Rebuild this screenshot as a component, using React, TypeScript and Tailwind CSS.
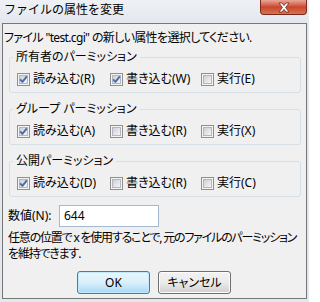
import React from 'react'

const font = "[font-family:'Noto_Sans','Noto_Sans_CJK_JP',sans-serif] [font-feature-settings:'palt']"

function Check({ checked }: { checked: boolean }) {
  return (
    <svg width="13" height="13" viewBox="0 0 13 13" className="shrink-0">
      <defs>
        <linearGradient id="cbfill" x1="0" y1="0" x2="1" y2="1">
          <stop offset="0" stopColor="#c9cdd3" />
          <stop offset="1" stopColor="#f8f8f8" />
        </linearGradient>
      </defs>
      <rect x="0.5" y="0.5" width="12" height="12" fill="#f4f4f4" stroke="#8e8f8f" />
      <rect x="2.5" y="2.5" width="8" height="8" fill="url(#cbfill)" stroke="#b3b7bd" />
      {checked && (
        <path d="M3.2 6.4 L5.4 8.8 L9.8 3.4" fill="none" stroke="#4e69a8" strokeWidth="1.9" strokeLinejoin="round" />
      )}
    </svg>
  )
}

function Item({ label, checked, w }: { label: string; checked: boolean; w: string }) {
  return (
    <div className={`flex items-center gap-[3px] ${w}`}>
      <Check checked={checked} />
      <span className="whitespace-nowrap">{label}</span>
    </div>
  )
}

function Group({ title, items }: { title: string; items: { label: string; checked: boolean }[] }) {
  return (
    <fieldset className="mx-[6px] mr-[5px] border border-[#d5dfe5] rounded-[3px] pl-[3px] pt-[6px] pb-[5px]">
      <legend className="px-[3px] leading-[16px]">{title}</legend>
      <div className="flex h-[16px] items-center pl-[4px]">
        <Item label={items[0].label} checked={items[0].checked} w="w-[93px]" />
        <Item label={items[1].label} checked={items[1].checked} w="w-[91px]" />
        <Item label={items[2].label} checked={items[2].checked} w="" />
      </div>
    </fieldset>
  )
}

export default function App() {
  return (
    <div className={`w-[309px] h-[302px] bg-[#e3e8ee] text-[12px] leading-[16px] text-black overflow-hidden ${font}`}>
      {/* title bar */}
      <div className="h-[23px] flex items-start justify-between bg-gradient-to-b from-[#eef1f5] to-[#e3e8ee]">
        <div className="pl-[4px] pt-[2px] [font-feature-settings:normal] leading-[16px]">ファイルの属性を変更</div>
        <div className="mr-[2px] w-[47px] h-[15px] rounded-b-[4px] border border-t-0 border-[#7a2a1c] bg-gradient-to-b from-[#e9a797] via-[#c8462d] to-[#d8714f] flex items-center justify-center">
          <svg width="14" height="11" viewBox="0 0 14 11">
            <path d="M2 1 H5 L7 3.6 L9 1 H12 L8.6 5.5 L12 10 H9 L7 7.4 L5 10 H2 L5.4 5.5 Z" fill="#fff" stroke="#6a2a20" strokeWidth="0.8" strokeLinejoin="round" />
          </svg>
        </div>
      </div>

      {/* client area */}
      <div className="ml-[2px] w-[305px] h-[276px] border border-[#767676] bg-[#f0f0f0] flex flex-col">
        <div className="pl-[1px] pt-[6px] whitespace-nowrap tracking-[-0.65px]">ファイル "test.cgi" の新しい属性を選択してください.</div>

        <div className="mt-[3px] flex flex-col gap-[8px]">
          <Group
            title="所有者のパーミッション"
            items={[
              { label: '読み込む(R)', checked: true },
              { label: '書き込む(W)', checked: true },
              { label: '実行(E)', checked: false },
            ]}
          />
          <Group
            title="グループ パーミッション"
            items={[
              { label: '読み込む(A)', checked: true },
              { label: '書き込む(R)', checked: false },
              { label: '実行(X)', checked: false },
            ]}
          />
          <Group
            title="公開パーミッション"
            items={[
              { label: '読み込む(D)', checked: true },
              { label: '書き込む(R)', checked: false },
              { label: '実行(C)', checked: false },
            ]}
          />
        </div>

        <div className="mt-[8px] pl-[5px] flex items-center">
          <span className="w-[51px] whitespace-nowrap">数値(N):</span>
          <div className="w-[100px] h-[22px] border border-[#a4b9cf] bg-white pl-[4px] flex items-center">644</div>
        </div>

        <div className="mt-[3px] pl-[5px] leading-[16px] whitespace-nowrap tracking-[-1.2px]">
          <div>任意の位置で x を使用することで, 元のファイルのパーミッション</div>
          <div>を維持できます.</div>
        </div>

        <div className="mt-[9px] flex justify-center gap-[8px] pr-[1px]">
          <button className="w-[73px] h-[23px] rounded-[3px] border border-[#3c7fb1] bg-gradient-to-b from-[#eaf6fd] via-[#d9f0fc] to-[#a7d9f5] shadow-[inset_0_0_0_1px_#c3e7fb]">
            OK
          </button>
          <button className="w-[73px] h-[23px] rounded-[3px] border border-[#707070] bg-gradient-to-b from-[#f2f2f2] via-[#ebebeb] to-[#cfcfcf] shadow-[inset_0_0_0_1px_#fcfcfc]">
            キャンセル
          </button>
        </div>
      </div>
    </div>
  )
}
